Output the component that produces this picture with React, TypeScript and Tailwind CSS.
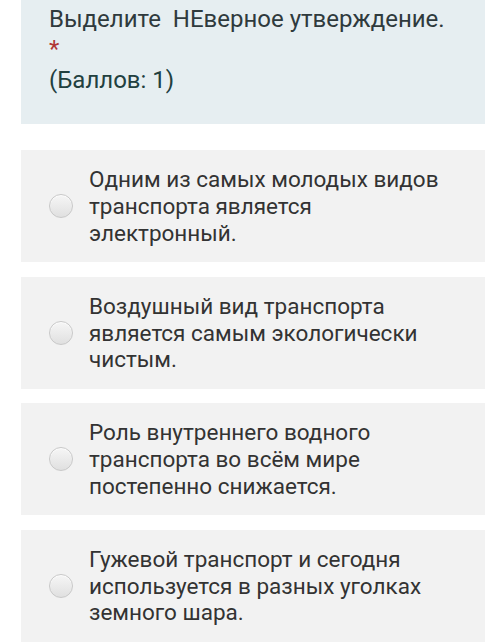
import React from "react";

const options: string[][] = [
  ["Одним из самых молодых видов", "транспорта является", "электронный."],
  ["Воздушный вид транспорта", "является самым экологически", "чистым."],
  ["Роль внутреннего водного", "транспорта во всём мире", "постепенно снижается."],
  ["Гужевой транспорт и сегодня", "используется в разных уголках", "земного шара."],
];

function Radio() {
  return (
    <div className="w-[24px] h-[24px] shrink-0 rounded-full border border-[#c9c9c9] bg-gradient-to-b from-[#f6f6f6] to-[#e0e0e0] shadow-[inset_0_1px_1px_rgba(255,255,255,0.8)]" />
  );
}

export default function App() {
  return (
    <div className="w-[500px] h-[644px] overflow-hidden bg-white font-['Roboto',sans-serif]">
      <div className="mx-[21px] w-[464px] h-[124px] bg-[#e6eef1] pl-[28px] pt-[3.5px] text-[24px] leading-[30.5px]">
        <div className="text-[#2f3a3d] whitespace-pre">Выделите  НЕверное утверждение.</div>
        <div className="text-[#b03535]">*</div>
        <div className="text-[#22403f]">(Баллов: 1)</div>
      </div>
      <div className="mt-[26px] flex flex-col gap-[14.5px]">
        {options.map((lines, i) => (
          <div
            key={i}
            className="mx-[21px] w-[464px] h-[112px] bg-[#f2f2f2] flex items-center pl-[28px]"
          >
            <Radio />
            <div className="ml-[16px] text-[22.5px] leading-[26.7px] text-[#333333] pt-[1px]">
              {lines.map((l, j) => (
                <div key={j}>{l}</div>
              ))}
            </div>
          </div>
        ))}
      </div>
    </div>
  );
}
